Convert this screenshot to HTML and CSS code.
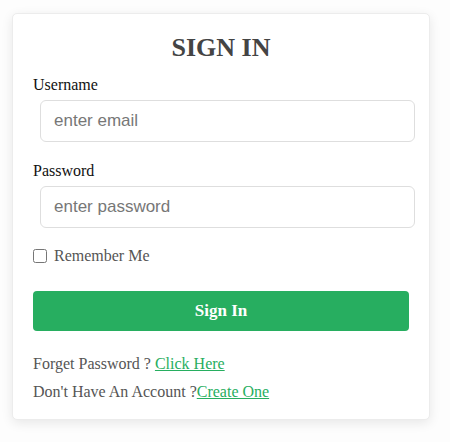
FILE: index.html
```html
<!DOCTYPE html>
<html>
<head>
<meta charset="utf-8">
<link rel="stylesheet" href="styles.css">
</head>
<body>
<div class="card">
  <h2 class="title">SIGN IN</h2>
  <label class="label">Username</label>
  <input class="field" type="text" placeholder="enter email">
  <label class="label label-pass">Password</label>
  <input class="field" type="password" placeholder="enter password">
  <div class="remember">
    <input class="check" type="checkbox" id="rem">
    <label for="rem">Remember Me</label>
  </div>
  <button class="btn">Sign In</button>
  <div class="links">
    <p>Forget Password ? <a href="#">Click Here</a></p>
    <p>Don't Have An Account ?<a href="#">Create One</a></p>
  </div>
</div>
</body>
</html>
```
FILE: styles.css
```css
* { box-sizing: border-box; }
html, body { margin: 0; padding: 0; }
body {
  background: #fdfdfd;
  font-family: "Liberation Serif", "Times New Roman", serif;
  width: 450px;
  height: 442px;
  overflow: hidden;
}
.card {
  margin: 13px 0 0 12px;
  width: 418px;
  background: #fff;
  border: 1px solid #ececec;
  border-radius: 5px;
  box-shadow: 0 3px 12px rgba(0,0,0,0.09);
  padding: 19px 20px 13px 20px;
  display: flex;
  flex-direction: column;
}
.title {
  margin: 0;
  font-size: 26px;
  line-height: 30px;
  font-weight: bold;
  color: #444;
  text-align: center;
}
.label {
  display: block;
  margin-top: 12px;
  font-size: 16px;
  line-height: 20px;
  color: #111;
}
.label-pass { margin-top: 19px; }
.field {
  display: block;
  margin: 5px 0 0 7px;
  width: 375px;
  height: 42px;
  border: 1px solid #dedede;
  border-radius: 6px;
  padding: 0 13px;
  font-family: "Liberation Sans", Arial, sans-serif;
  font-size: 17px;
  color: #333;
  background: #fff;
  outline: none;
}
.field::placeholder { color: #777; }
.remember {
  margin-top: 18px;
  display: flex;
  align-items: center;
  height: 20px;
  font-size: 16px;
  color: #555;
}
.check {
  margin: 0 7px 0 0;
  width: 14px;
  height: 14px;
}
.btn {
  margin-top: 25px;
  width: 376px;
  height: 40px;
  border: none;
  border-radius: 4px;
  background: #27ae60;
  color: #fff;
  font-family: "Liberation Serif", "Times New Roman", serif;
  font-size: 17px;
  font-weight: bold;
}
.links { margin-top: 19px; }
.links p {
  margin: 0;
  font-size: 16px;
  line-height: 28px;
  color: #555;
}
.links a { color: #27ae60; text-decoration: underline; }
```
